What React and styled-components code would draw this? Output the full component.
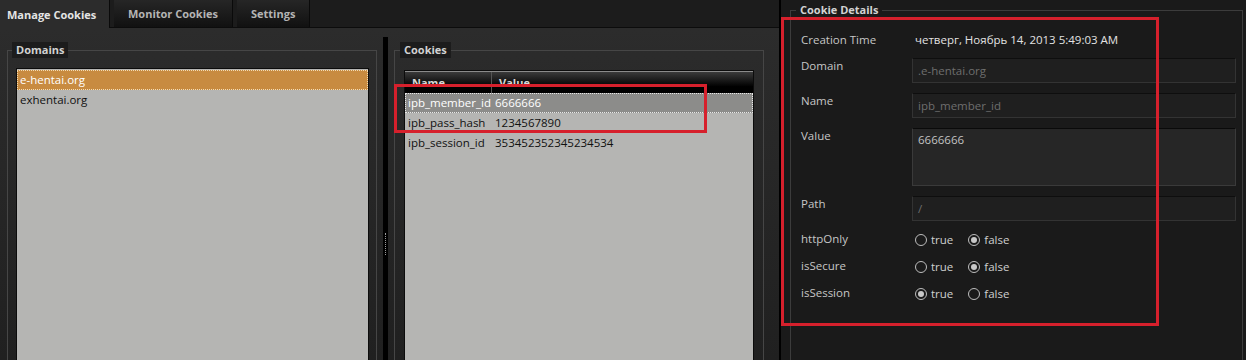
import React from 'react';
import styled, { createGlobalStyle } from 'styled-components';

const GlobalStyle = createGlobalStyle`
  html, body {
    margin: 0;
    padding: 0;
    background: #1a1a1a;
    overflow: hidden;
  }
  body {
    font-family: 'Open Sans', 'Noto Sans', sans-serif;
    font-size: 11.5px;
  }
`;

const domains = ['e-hentai.org', 'exhentai.org'];

const cookies = [
  { name: 'ipb_member_id', value: '6666666' },
  { name: 'ipb_pass_hash', value: '1234567890' },
  { name: 'ipb_session_id', value: '353452352345234534' },
];

const flags = [
  { label: 'httpOnly', value: false },
  { label: 'isSecure', value: false },
  { label: 'isSession', value: true },
];

function Radio({ checked, children }) {
  return (
    <RadioLabel>
      <RadioCircle checked={checked} />
      {children}
    </RadioLabel>
  );
}

function App() {
  return (
    <Wrapper>
      <GlobalStyle />
      <LeftPane>
        <TabBar>
          <Tab active>Manage Cookies</Tab>
          <Tab>Monitor Cookies</Tab>
          <Tab>Settings</Tab>
        </TabBar>
        <Content>
          <Group width={370}>
            <Legend>Domains</Legend>
            <ListBox>
              {domains.map((d, i) => (
                <ListItem key={d} selected={i === 0}>{d}</ListItem>
              ))}
            </ListBox>
          </Group>
          <Splitter>
            <Grip />
          </Splitter>
          <Group width={370} pad={9} top={12}>
            <Legend>Cookies</Legend>
            <Table>
              <HeadRow>
                <HeadCell>Name</HeadCell>
                <HeadCell last>Value</HeadCell>
              </HeadRow>
              {cookies.map((c, i) => (
                <Row key={c.name} selected={i === 0}>
                  <Cell>{c.name}</Cell>
                  <Cell>{c.value}</Cell>
                </Row>
              ))}
            </Table>
          </Group>
        </Content>
      </LeftPane>
      <RightPane>
        <DetailsGroup>
          <Legend left={-5} plain>Cookie Details</Legend>
          <Form>
            <Label>Creation Time</Label>
            <Plain>четверг, Ноябрь 14, 2013 5:49:03 AM</Plain>
            <Label>Domain</Label>
            <Input>.e-hentai.org</Input>
            <Label>Name</Label>
            <Input>ipb_member_id</Input>
            <Label>Value</Label>
            <TextArea>6666666</TextArea>
            <Label>Path</Label>
            <Input>/</Input>
            {flags.map((f) => (
              <React.Fragment key={f.label}>
                <Label>{f.label}</Label>
                <Radios>
                  <Radio checked={f.value}>true</Radio>
                  <Radio checked={!f.value}>false</Radio>
                </Radios>
              </React.Fragment>
            ))}
          </Form>
        </DetailsGroup>
      </RightPane>
      <Marker style={{ left: 394, top: 84, width: 313, height: 49 }} />
      <Marker style={{ left: 781, top: 17, width: 378, height: 309 }} />
    </Wrapper>
  );
}

export default App;

const Wrapper = styled.div`
  position: relative;
  display: flex;
  width: 1246px;
  height: 360px;
  overflow: hidden;
  background: #1a1a1a;
`;

const LeftPane = styled.div`
  display: flex;
  flex-direction: column;
  width: 779px;
  border-right: 2px solid #000;
  flex-shrink: 0;
  overflow: hidden;
`;

const TabBar = styled.div`
  display: flex;
  flex-shrink: 0;
  height: 28px;
  gap: 4px;
  background: #1c1c1c;
  border-bottom: 1px solid #0c0c0c;
  box-sizing: border-box;
`;

const Tab = styled.div`
  display: flex;
  align-items: center;
  justify-content: center;
  box-sizing: border-box;
  padding: 0 ${(p) => (p.active ? '7px' : '14px')};
  min-width: ${(p) => (p.active ? '110px' : '46px')};
  font-weight: 700;
  font-size: 11px;
  color: ${(p) => (p.active ? '#e4e4e4' : '#b4b4b4')};
  background: ${(p) =>
    p.active ? '#2c2c2c' : 'linear-gradient(#262626, #111111)'};
  border-right: 1px solid #0a0a0a;
  margin-bottom: ${(p) => (p.active ? '-1px' : '0')};
  &:first-child {
    justify-content: flex-start;
  }
`;

const Content = styled.div`
  flex: 1;
  min-height: 0;
  display: flex;
  align-items: flex-start;
  padding: 14px 0 0 7px;
  background: linear-gradient(#2c2c2c, #202020);
`;

const Group = styled.fieldset`
  margin: 0;
  width: ${(p) => p.width}px;
  height: 340px;
  flex-shrink: 0;
  box-sizing: border-box;
  padding: ${(p) => p.top || 10}px ${(p) => p.pad || 7}px 0 ${(p) => p.pad || 8}px;
  border: 1px solid #464646;
  min-width: 0;
`;

const Legend = styled.legend`
  margin-left: ${(p) => p.left || -4}px;
  padding: 0 4px;
  height: 16px;
  line-height: 16px;
  font-weight: 700;
  font-size: 11px;
  color: #d2d2d2;
  background: ${(p) => (p.plain ? 'transparent' : '#1c1c1c')};
`;

const ListBox = styled.div`
  height: 300px;
  background: #b5b5b3;
  border: 1px solid #0c0c0c;
  padding-top: 1px;
`;

const ListItem = styled.div`
  height: 20px;
  line-height: 20px;
  padding-left: 3px;
  color: ${(p) => (p.selected ? '#fff' : '#111')};
  background: ${(p) => (p.selected ? '#c88b40' : 'transparent')};
  outline: ${(p) => (p.selected ? '1px dotted #f4dcb4' : 'none')};
  outline-offset: -1px;
`;

const Splitter = styled.div`
  width: 5px;
  height: 340px;
  margin: -5px 6px 0 6px;
  background: #000;
  flex-shrink: 0;
  display: flex;
  justify-content: center;
`;

const Grip = styled.div`
  margin-top: 196px;
  width: 1px;
  height: 22px;
  border-left: 1px dotted #9a9a9a;
`;

const Table = styled.div`
  height: 300px;
  background: #b5b5b3;
  border: 1px solid #0c0c0c;
`;

const HeadRow = styled.div`
  display: grid;
  grid-template-columns: 87px 1fr;
  height: 21px;
  background: linear-gradient(#3a3a3a, #000 70%);
  border-top: 1px solid #8a8a8a;
`;

const HeadCell = styled.div`
  padding-left: 7px;
  line-height: 21px;
  font-weight: 700;
  font-size: 11px;
  color: #d8d8d8;
  border-right: ${(p) => (p.last ? 'none' : '1px solid #555')};
`;

const Row = styled.div`
  display: grid;
  grid-template-columns: 87px 1fr;
  height: 20px;
  line-height: 20px;
  color: ${(p) => (p.selected ? '#fff' : '#111')};
  background: ${(p) => (p.selected ? '#8c8c8a' : 'transparent')};
  outline: ${(p) => (p.selected ? '1px dotted #e8e8e8' : 'none')};
  outline-offset: -1px;
`;

const Cell = styled.div`
  padding-left: 3px;
  white-space: nowrap;
`;

const RightPane = styled.div`
  flex: 1;
  padding: 2px 3px 0 9px;
  background: #1a1a1a;
`;

const DetailsGroup = styled.fieldset`
  margin: 0;
  height: 380px;
  box-sizing: border-box;
  padding: 14px 6px 0 10px;
  border: 1px solid #3c3c3c;
  min-width: 0;
`;

const Form = styled.div`
  display: grid;
  grid-template-columns: 111px 1fr;
  grid-auto-rows: auto;
  row-gap: 10px;
  align-items: start;
`;

const Label = styled.div`
  line-height: 16px;
  color: #c6c6c6;
`;

const Plain = styled.div`
  line-height: 16px;
  padding-left: 3px;
  color: #e2e2e2;
  margin-bottom: -1px;
`;

const Input = styled.div`
  height: 25px;
  box-sizing: border-box;
  padding: 0 5px;
  line-height: 23px;
  color: #6e6e6e;
  background: #1f1f1f;
  border: 1px solid #333;
  border-top-color: #0e0e0e;
`;

const TextArea = styled(Input)`
  height: 58px;
  padding-top: 3px;
  line-height: 16px;
  color: #c2c2c2;
  background: #262626;
  border-color: #3a3a3a;
  border-top-color: #0a0a0a;
`;

const Radios = styled.div`
  display: flex;
  gap: 15px;
  padding-left: 3px;
  height: 17px;
  align-items: center;
`;

const RadioLabel = styled.div`
  display: flex;
  align-items: center;
  gap: 4px;
  color: #cfcfcf;
`;

const RadioCircle = styled.span`
  width: 12px;
  height: 12px;
  box-sizing: border-box;
  border-radius: 50%;
  border: 1px solid #bdbdbd;
  display: flex;
  align-items: center;
  justify-content: center;
  &::after {
    content: '';
    width: 6px;
    height: 6px;
    border-radius: 50%;
    background: ${(p) => (p.checked ? '#c8c8c8' : 'transparent')};
  }
`;

const Marker = styled.div`
  position: absolute;
  box-sizing: border-box;
  border: 3px solid #d6202c;
  pointer-events: none;
`;
